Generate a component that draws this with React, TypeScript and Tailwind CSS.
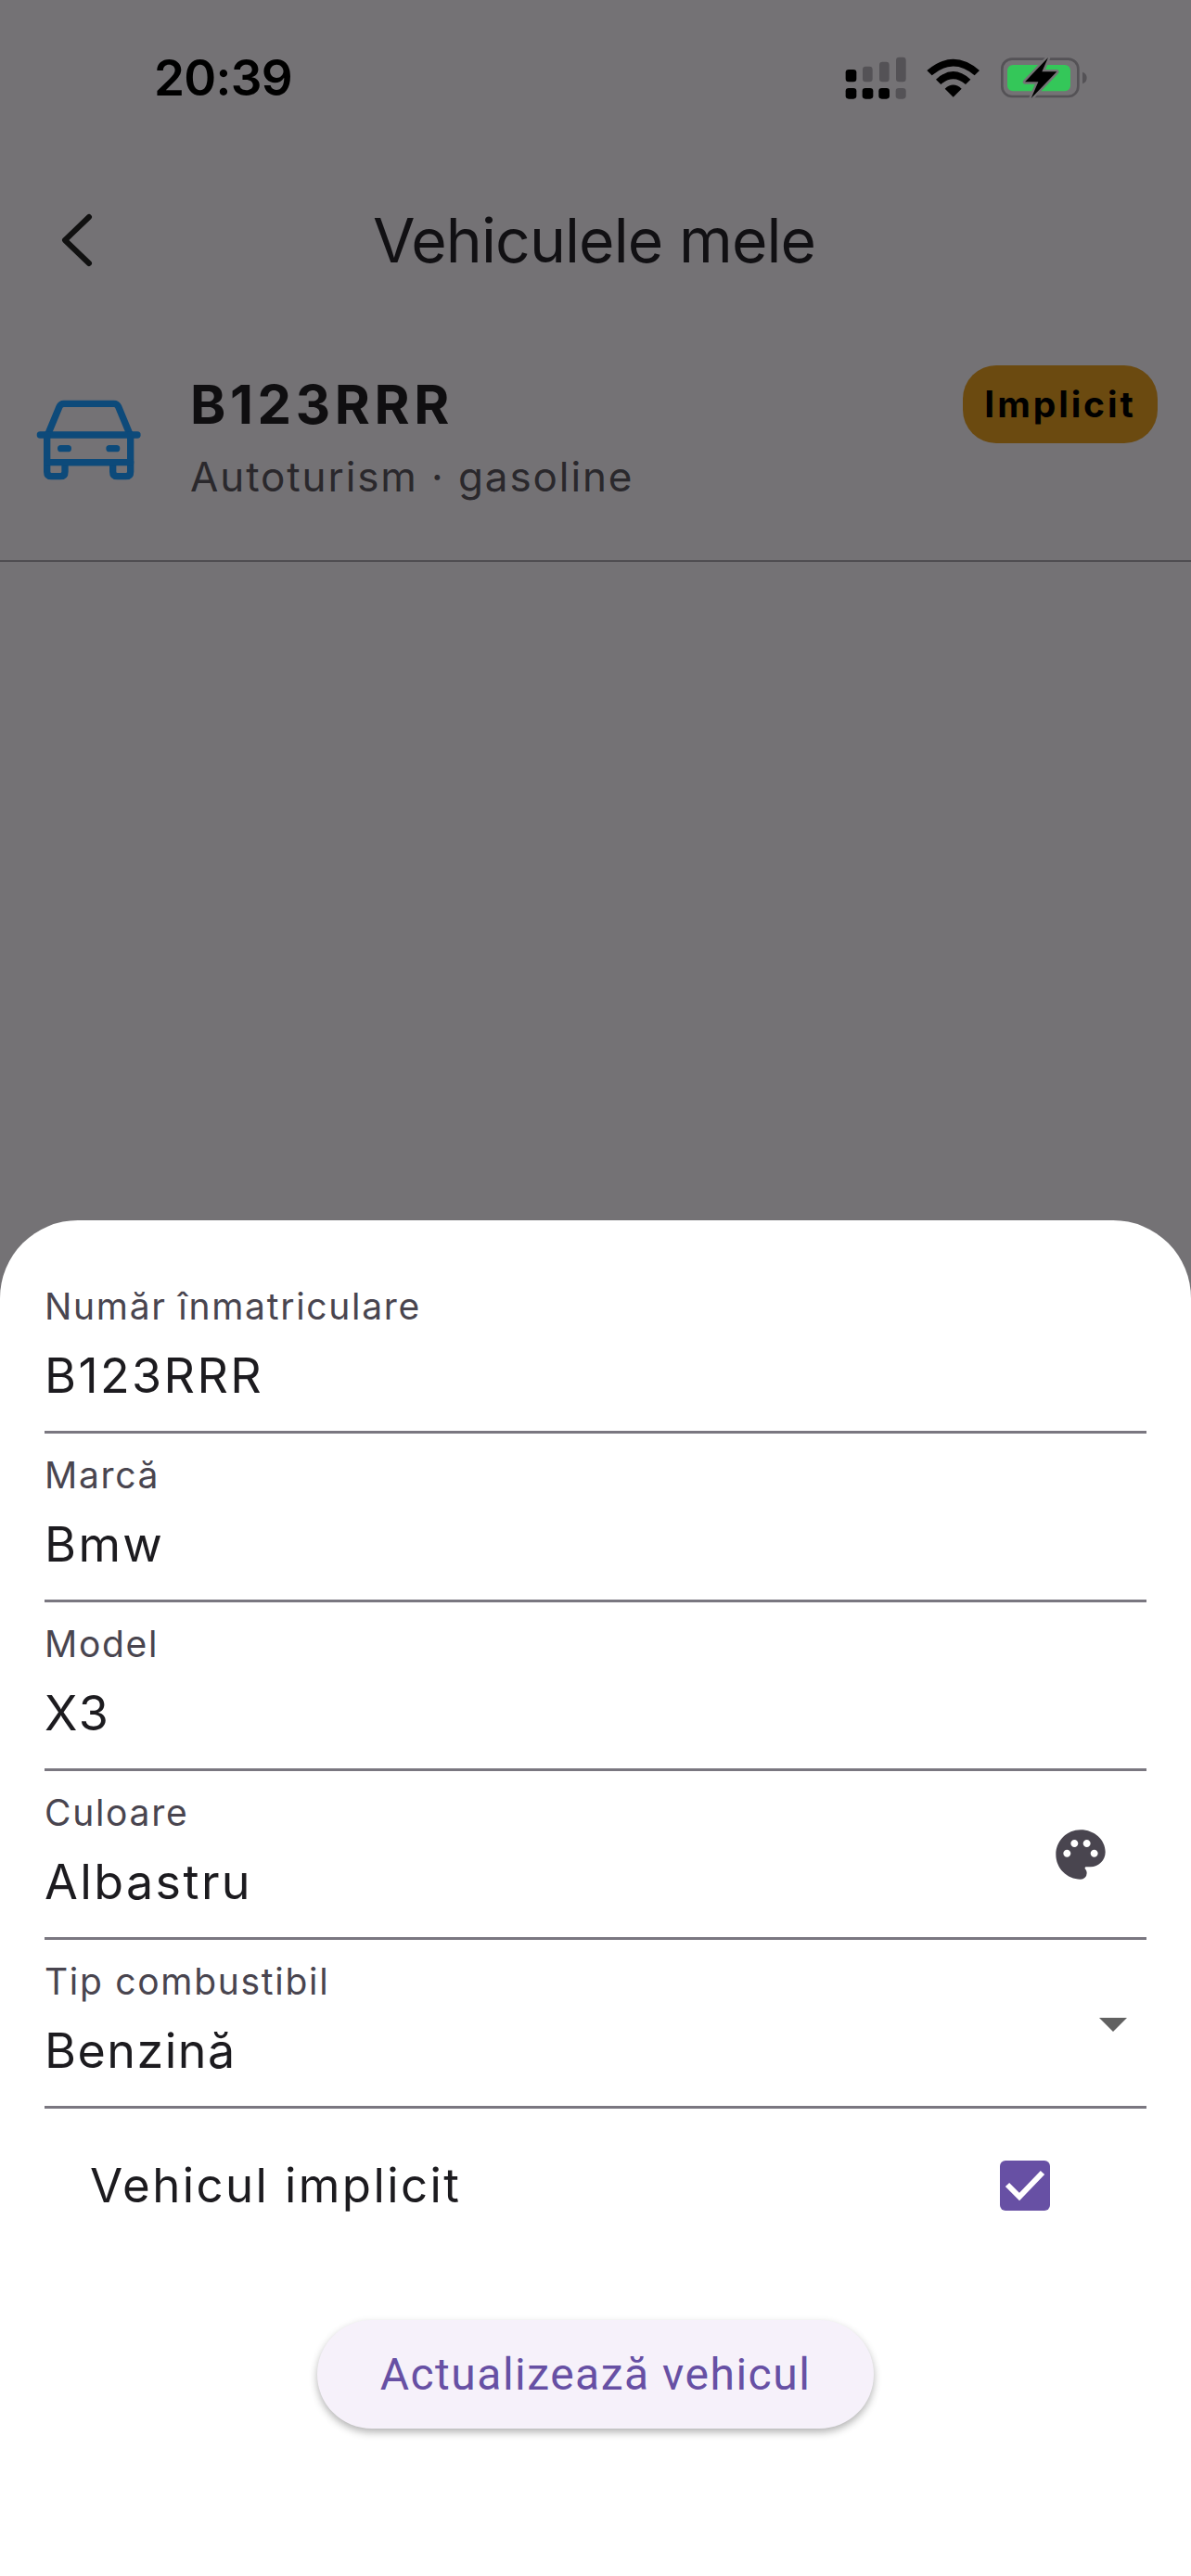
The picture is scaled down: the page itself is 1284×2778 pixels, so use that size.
import { MdPalette } from "react-icons/md";

function StatusIcons() {
  return (
    <svg width="340" height="90" viewBox="0 0 1020 270">
      <rect x="155" y="105" width="35" height="40" rx="10" fill="#000" />
      <rect x="210" y="95" width="32" height="50" rx="10" fill="#545256" />
      <rect x="264" y="80" width="32" height="65" rx="10" fill="#545256" />
      <rect x="318" y="65" width="32" height="80" rx="10" fill="#545256" />
      <rect x="155" y="165" width="35" height="35" rx="10" fill="#000" />
      <rect x="209" y="165" width="35" height="35" rx="10" fill="#000" />
      <rect x="262" y="165" width="35" height="35" rx="10" fill="#000" />
      <rect x="317" y="165" width="33" height="35" rx="10" fill="#545256" />
      <path d="M418 108 Q503 35 588 108 L572 124 Q503 65 434 124 Z" fill="#000" />
      <path d="M447 137 Q503 85 559 137 L543 153 Q503 118 463 153 Z" fill="#000" />
      <path d="M476 167 Q503 142 530 167 L503 194 Z" fill="#000" />
      <rect x="661" y="71" width="246" height="121" rx="32" fill="none" stroke="#545256" strokeWidth="8" />
      <rect x="678" y="90" width="204" height="85" rx="18" fill="#34C759" />
      <path d="M921 113 Q935 118 935 132 Q935 146 921 151 Z" fill="#545256" />
      <path d="M810 66 L735 145 H778 L755 198 L838 112 H790 Z" fill="#000" stroke="#747275" strokeWidth="14" paintOrder="stroke" strokeLinejoin="round" />
    </svg>
  );
}

function CarIcon() {
  return (
    <svg width="200" height="150" viewBox="0 0 600 450" fill="none" stroke="#0D4A7A" strokeWidth="22" strokeLinecap="round" strokeLinejoin="round">
      <path d="M95 205 L132 116 Q136 106 147 106 H308 Q319 106 323 116 L360 205" />
      <path d="M70 207 H384" />
      <path d="M92 207 V326 Q92 341 107 341 H135 Q150 341 150 326 V296 H305 V326 Q305 341 320 341 H347 Q362 341 362 326 V207" />
      <path d="M92 296 H362" />
      <path d="M137 251 H160 M294 251 H317" />
    </svg>
  );
}

function Field({ label, value, strong, children }: { label: string; value: string; strong?: boolean; children?: React.ReactNode }) {
  return (
    <div className="relative flex h-[182px] flex-col border-b-[3px] border-[#7a7780] pt-[20px]">
      <div className="text-[39px] font-normal leading-[50px] tracking-[1.7px] text-[#49454F]">{label}</div>
      <div className={`mt-[17px] text-[52px] font-normal leading-[66px] text-[#1c1b1f] ${strong ? "tracking-[1.5px]" : "tracking-[2.4px]"}`}>{value}</div>
      {children}
    </div>
  );
}

export default function App() {
  return (
    <div className="flex h-[2778px] w-[1284px] flex-col overflow-hidden bg-[#747275] font-['Inter',sans-serif]">
      <div className="flex h-[1316px] flex-col">
        <div className="flex h-[130px] items-start justify-between pl-[166px] pr-[84px] pt-[40px]">
          <div className="mt-[14px] text-[53px] font-semibold leading-[60px] tracking-[-0.7px] text-black">20:39</div>
          <StatusIcons />
        </div>
        <div className="flex h-[258px] items-center">
          <svg className="ml-[60px]" width="46" height="66" viewBox="0 0 46 66" fill="none" stroke="#111" strokeWidth="6" strokeLinecap="round" strokeLinejoin="round">
            <path d="M36 8 L10 33 L36 58" />
          </svg>
          <div className="ml-[296px] text-[66px] font-normal leading-[80px] tracking-[-0.9px] text-[#111013]">Vehiculele mele</div>
        </div>
        <div className="flex h-[218px] items-start border-b-[2px] border-[#4f4d51]">
          <div className="ml-[20px] mt-[12px] h-[150px] w-[185px] shrink-0"><CarIcon /></div>
          <div className="mt-[13px] flex flex-col">
            <div className="text-[58px] font-bold leading-[70px] tracking-[4.6px] text-[#0f0e10]">B123RRR</div>
            <div className="mt-[18px] text-[44px] font-normal leading-[50px] tracking-[1.9px] text-[#2a282c]">Autoturism · gasoline</div>
          </div>
          <div className="ml-auto mr-[36px] mt-[6px] flex h-[84px] w-[210px] items-center justify-center rounded-[36px] bg-[#6B4A10] text-[39px] font-bold tracking-[2.9px] text-black">Implicit</div>
        </div>
      </div>

      <div className="flex flex-1 flex-col rounded-t-[84px] bg-white px-[48px] pt-[48px]">
        <Field label="Număr înmatriculare" value="B123RRR" />
        <Field label="Marcă" value="Bmw" />
        <Field label="Model" value="X3" />
        <Field label="Culoare" value="Albastru">
          <MdPalette className="absolute right-[39px] top-[58px] text-[#49454F]" size={64} />
        </Field>
        <Field label="Tip combustibil" value="Benzină" strong>
          <div className="absolute right-[21px] top-[84px] h-0 w-0 border-x-[15px] border-t-[15px] border-x-transparent border-t-[#616161]" />
        </Field>
        <div className="flex h-[164px] items-center justify-between pl-[49px] pr-[104px] pt-[2px]">
          <div className="text-[51px] font-normal tracking-[2.4px] text-[#1c1b1f]">Vehicul implicit</div>
          <div className="flex h-[54px] w-[54px] items-center justify-center rounded-[6px] bg-[#6750A4]">
            <svg width="44" height="36" viewBox="0 0 44 36" fill="none" stroke="#fff" strokeWidth="6">
              <path d="M3 17 L16 30 L41 4" />
            </svg>
          </div>
        </div>
        <div className="mt-[64px] flex justify-center">
          <div className="flex h-[117px] w-[600px] items-center justify-center rounded-full bg-[#F6F1FA] font-['Roboto',sans-serif] text-[48px] font-normal tracking-[1.5px] text-[#6750A4] shadow-[0_4px_8px_rgba(0,0,0,0.3)]">Actualizează vehicul</div>
        </div>
      </div>
    </div>
  );
}
